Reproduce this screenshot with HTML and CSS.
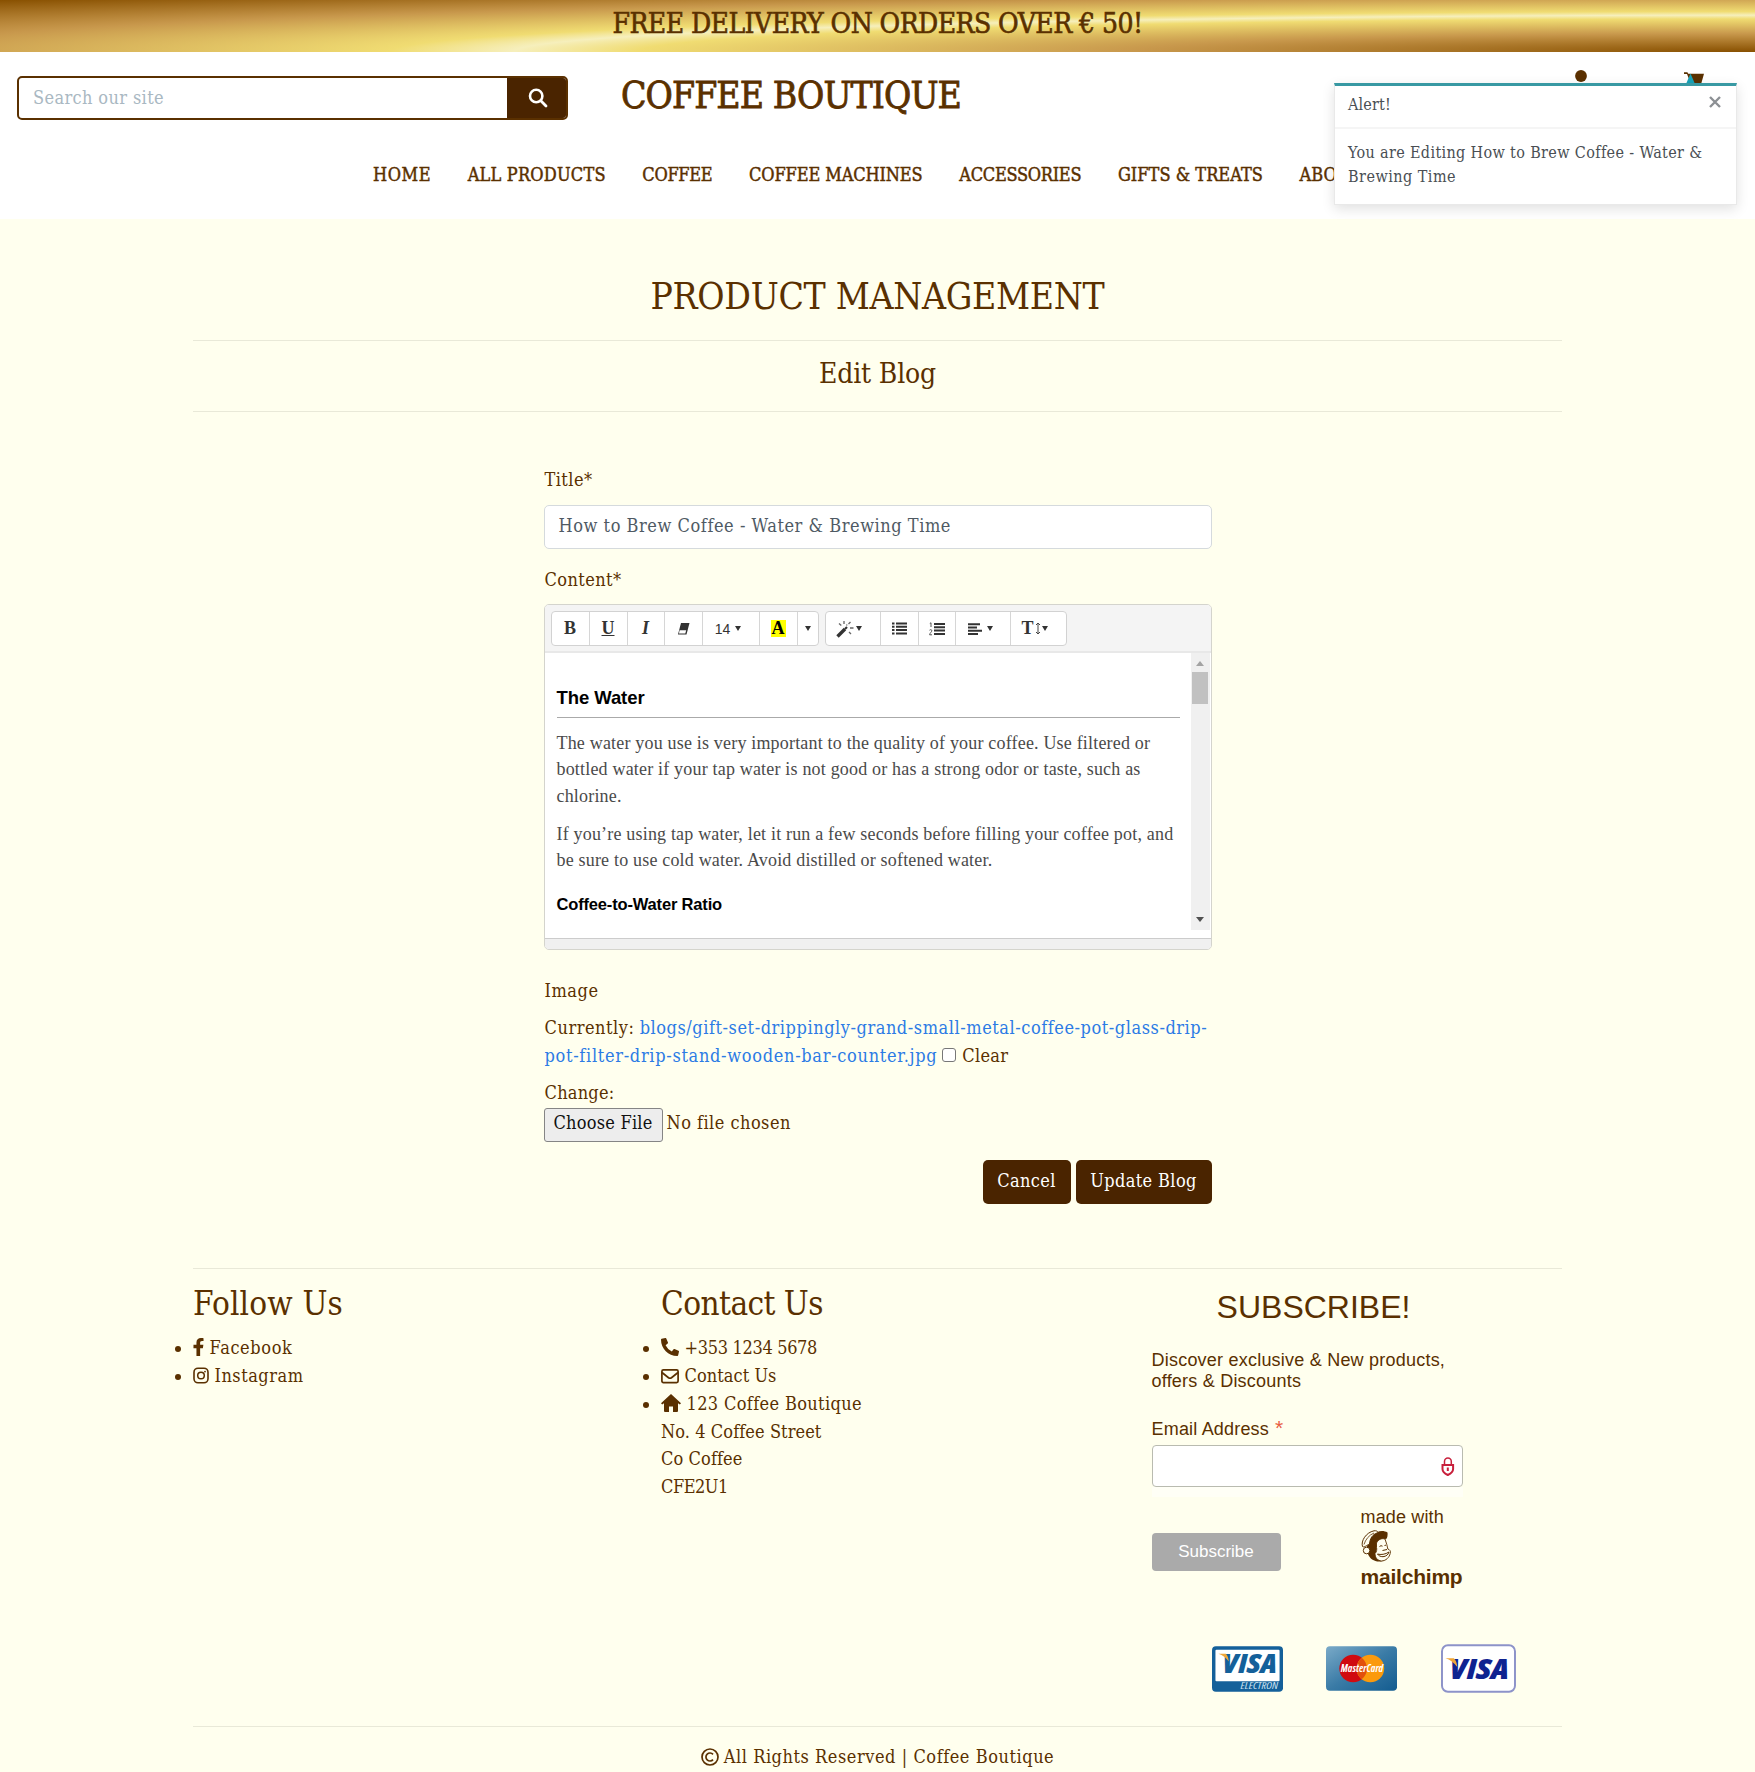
FILE: index.html
```
<!DOCTYPE html>
<html lang="en">
<head>
<meta charset="utf-8">
<title>Coffee Boutique</title>
<link rel="stylesheet" href="styles.css">
</head>
<body>
<div class="banner"><span class="t-banner">FREE DELIVERY ON ORDERS OVER € 50!</span></div>
<header class="header">
  <div class="topbar">
    <form class="search">
      <div class="search-field"><span class="t-search">Search our site</span></div>
      <div class="search-btn"><svg width="20" height="20" viewBox="0 0 20 20"><circle cx="8.2" cy="8" r="6.2" fill="none" stroke="#fff" stroke-width="2.6"/><path d="M12.8 12.8 18 18" stroke="#fff" stroke-width="2.8" stroke-linecap="round"/></svg></div>
    </form>
    <div class="logo"><span class="t-logo">COFFEE BOUTIQUE</span></div>
    <div class="account">
      <svg class="user" width="20" height="24" viewBox="0 0 20 24"><circle cx="10" cy="6" r="5.9"/><path d="M1 23c0-6 4-9 9-9s9 3 9 9z"/></svg>
      <svg class="cart" width="22" height="20" viewBox="0 0 22 20"><path d="M1 1.2h3.4l.8 1.6H21l-2.6 9.2H7.5L4 3H1z"/><path d="M3 13 7.500 2.500 12 13z" fill="#17a2b8"/></svg>
    </div>
  </div>
  <nav class="nav">
    <span class="t-n1">HOME</span><span class="t-n2">ALL PRODUCTS</span><span class="t-n3">COFFEE</span><span class="t-n4">COFFEE MACHINES</span><span class="t-n5">ACCESSORIES</span><span class="t-n6">GIFTS &amp; TREATS</span><span>ABOUT</span>
  </nav>
</header>
<aside class="toast">
  <div class="toast-head"><span class="t-alert">Alert!</span><svg width="14" height="14" viewBox="0 0 14 14"><path d="M2 2l10 10M12 2 2 12" stroke="#8c9094" stroke-width="2.4"/></svg></div>
  <div class="toast-body"><span class="t-toast1">You are Editing How to Brew Coffee - Water &amp;</span><br><span class="t-toast2">Brewing Time</span></div>
</aside>
<main class="container">
  <h1 class="title"><span class="t-h1">PRODUCT MANAGEMENT</span></h1>
  <h2 class="subtitle"><span class="t-h2">Edit Blog</span></h2>
  <form class="form">
    <div class="label label-title"><span class="t-lt">Title*</span></div>
    <div class="input"><span class="t-in">How to Brew Coffee - Water &amp; Brewing Time</span></div>
    <div class="label label-content"><span class="t-lc">Content*</span></div>
    <div class="editor">
      <div class="toolbar">
        <div class="group">
          <span class="tb w38 ser">B</span><span class="tb w38 ser und">U</span><span class="tb w37 ser ita">I</span>
          <span class="tb w38"><svg width="13" height="12" viewBox="0 0 13 12"><path d="M4 0h8.500L9.500 11.500H1z" fill="#333"/><path d="M2.600 7.200h6.600l-.9 3.200H2z" fill="#fff"/></svg></span>
          <span class="tb w57 size"><span class="num">14</span><i class="caret"></i></span>
          <span class="tb w38"><b class="hl">A</b></span>
          <span class="tb w20"><i class="caret"></i></span>
        </div>
        <div class="group">
          <span class="tb w55 wand"><svg width="18" height="18" viewBox="0 0 18 18"><path d="M1.500 16.500 9 9" stroke="#333" stroke-width="3.400"/><path d="M9 9l2-2" stroke="#333" stroke-width="2.200"/><path d="M3 3.500l2.300 2M8 1v3M14.500 2l-2 2M14 8h3.500M13 12l2 2M10.500 5.500l.5-1" stroke="#666" stroke-width="1.300"/></svg><i class="caret"></i></span>
          <span class="tb w38"><svg width="15" height="13" viewBox="0 0 15 13"><path d="M0 1.500h2.500M0 4.800h2.500M0 8.100h2.500M0 11.400h2.500M4 1.500h11M4 4.800h11M4 8.100h11M4 11.400h11" stroke="#333" stroke-width="2"/></svg></span>
          <span class="tb w37"><svg width="16" height="14" viewBox="0 0 16 14"><path d="M5 2h11M5 5.300h11M5 8.600h11M5 11.900h11" stroke="#333" stroke-width="2"/><path d="M.8 1.500 2 .8V5M.5 8.200c1-1 2.500-.6 2.300.6C2.700 10 .8 11 .6 12.800H3" fill="none" stroke="#555" stroke-width="1"/></svg></span>
          <span class="tb w55 para"><svg width="14" height="12" viewBox="0 0 14 12"><path d="M0 1.200h12M0 4.500h9M0 7.800h14M0 11h10" stroke="#333" stroke-width="1.900"/></svg><i class="caret"></i></span>
          <span class="tb w55 ser th">T<svg width="6" height="13" viewBox="0 0 6 13"><path d="M3 2v9M1 3l2-2 2 2M1 10l2 2 2-2" fill="none" stroke="#444" stroke-width="1"/></svg><i class="caret"></i></span>
        </div>
      </div>
      <div class="editable">
        <div class="doc">
          <h3 class="doc-h"><span class="t-d0">The Water</span></h3>
          <p class="t-doc">The water you use is very important to the quality of your coffee. Use filtered or<br>bottled water if your tap water is not good or has a strong odor or taste, such as<br>chlorine.</p>
          <p class="t-doc">If you’re using tap water, let it run a few seconds before filling your coffee pot, and<br>be sure to use cold water. Avoid distilled or softened water.</p>
          <h4><span class="t-d6">Coffee-to-Water Ratio</span></h4>
        </div>
        <div class="scroll"><i class="up"></i><i class="thumb"></i><i class="down"></i></div>
      </div>
      <div class="status"></div>
    </div>
    <div class="label label-image"><span class="t-im">Image</span></div>
    <div class="current"><span class="t-cu">Currently:</span> <a class="t-l1">blogs/gift-set-drippingly-grand-small-metal-coffee-pot-glass-drip-</a><br><a class="t-l2">pot-filter-drip-stand-wooden-bar-counter.jpg</a><i class="check"></i><span class="t-cl">Clear</span></div>
    <div class="change"><span class="t-ch">Change:</span></div>
    <div class="file"><span class="file-btn"><span class="t-cf">Choose File</span></span><span class="t-nf">No file chosen</span></div>
    <div class="actions"><span class="btn b1"><span class="t-ca">Cancel</span></span><span class="btn b2"><span class="t-up">Update Blog</span></span></div>
  </form>
</main>
<footer class="container footer">
  <div class="cols">
    <section class="col-follow">
      <h2 class="fh"><span class="t-f1">Follow Us</span></h2>
      <ul>
        <li><svg width="11" height="18" viewBox="10 0 300 512" preserveAspectRatio="none"><path d="M279.14 288l14.22-92.66h-88.91v-60.13c0-25.35 12.42-50.06 52.24-50.06h40.42V6.260S260.430 0 225.360 0c-73.220 0-121.080 44.380-121.080 124.720v70.620H22.890V288h81.390v224h100.170V288z"/></svg><span class="t-fb">Facebook</span></li>
        <li><svg width="16" height="17" viewBox="0 0 16 17"><rect x="1" y="1.200" width="14" height="14.600" rx="4" fill="none" stroke="#5a3000" stroke-width="1.600"/><circle cx="8" cy="8.500" r="3.300" fill="none" stroke="#5a3000" stroke-width="1.500"/><circle cx="12" cy="4.600" r=".9"/></svg><span class="t-ig">Instagram</span></li>
      </ul>
    </section>
    <section class="col-contact">
      <h2 class="fh"><span class="t-f2">Contact Us</span></h2>
      <ul>
        <li><svg width="18" height="18" viewBox="0 0 512 512"><g transform="rotate(180 256 256)"><path d="M497.390 361.800l-112-48a24 24 0 0 0-28 6.900l-49.600 60.600A370.660 370.660 0 0 1 130.600 204.110l60.600-49.600a23.940 23.940 0 0 0 6.900-28l-48-112A24.160 24.160 0 0 0 122.600.610l-104 24A24 24 0 0 0 0 48c0 256.500 207.900 464 464 464a24 24 0 0 0 23.400-18.600l24-104a24.290 24.290 0 0 0-14.010-27.600z" transform="rotate(180 256 256)"/></g></svg><span class="t-c1">+353 1234 5678</span></li>
        <li><svg width="18" height="16" viewBox="0 0 18 16"><rect x=".9" y="1.900" width="16.200" height="12.700" rx="1.500" fill="none" stroke="#5a3000" stroke-width="1.700"/><path d="M1 4.500 7.500 9.700q1.500 1 3 0L17 4.500" fill="none" stroke="#5a3000" stroke-width="1.700"/></svg><span class="t-c2">Contact Us</span></li>
        <li><svg width="20" height="18" viewBox="0 0 20 18"><path d="M10 0 0 9.300l1.200 1.300L3 9.200V17q0 1 1 1h4v-5.500h4V18h4q1 0 1-1V9.200l1.800 1.400L20 9.300l-3.500-3.200z"/></svg><span class="t-c3">123 Coffee Boutique</span><br><span class="t-c4">No. 4 Coffee Street</span><br><span class="t-c5">Co Coffee</span><br><span class="t-c6">CFE2U1</span></li>
      </ul>
    </section>
    <section class="col-sub">
      <h2 class="sh">SUBSCRIBE!</h2>
      <p class="sp">Discover exclusive &amp; New products,<br>offers &amp; Discounts</p>
      <div class="sl"><span class="t-s4">Email Address</span> <span class="req">*</span></div>
      <div class="si"><svg width="14" height="19" viewBox="0 0 14 19"><path d="M3.500 7.500V4.500a3.400 3.400 0 0 1 6.800 0v3" fill="none" stroke="#c8203c" stroke-width="1.500"/><path d="M1.500 8h10.600v4q0 3.500-5.300 6-5.300-2.500-5.300-6z" fill="#fff" stroke="#c8203c" stroke-width="2"/><path d="M6.800 10.500v3.500" stroke="#c8203c" stroke-width="2"/></svg></div>
      <div class="sstrip"></div>
      <div class="srow">
        <div class="sbtn">Subscribe</div>
        <div class="chimp">
          <div class="mw">made with</div>
          <svg width="31" height="33" viewBox="0 0 31 33"><path d="M6 16C9 13 8.500 9 12 5.500 15 1 22-.5 26.500 2.500c.3 2.500 0 4-.7 6L23 9.500C19 8.500 17 11 16.500 14c.5 2-.5 4-1 6.500 0 5 3.500 8.500 9 9-5 4-15.500 2.500-18-7z" fill="#5a3000"/><path d="M15.500 13c1.500-3.500 5-5 8.500-4l1.800 5.500 1 4.500c2 .6 3.200 2.200 2.400 4.500-1 4-4.200 7.300-8.700 7.500-4-.3-6.500-3.500-6.500-7.500 1.800-1.500 2-4.500 1.500-6z" fill="#fffff0" stroke="#5a3000" stroke-width=".9"/><path d="M16.500 24c3 1 8 .5 11.500-2-.5 2.500-3 4.500-6 4.700-2.500 0-4.500-1-5.500-2.700zM18.500 16.500q1.500-1.500 3-.3M23.500 15.500l1.500-.4M21.500 20.500l4.500-1" fill="none" stroke="#5a3000" stroke-width="1"/><path d="M8.500 14C6 15 3 18 1.500 16.500-.3 11 5 2.500 13 .8c2.500-.3 4.500.7 3.500 2-5 1.500-7.500 5.500-8 11.200z" fill="#fffff0" stroke="#5a3000" stroke-width="1"/><path d="M3 14.500C4.500 9.500 8 5 13 3" fill="none" stroke="#5a3000" stroke-width=".8"/><circle cx="5.600" cy="20.500" r="3.300" fill="#fffff0" stroke="#5a3000" stroke-width="1"/></svg>
          <div class="mc">mailchimp</div>
        </div>
      </div>
      <div class="cards">
        <svg width="72" height="46" viewBox="0 0 72 46"><rect width="72" height="46" rx="4" fill="#14609a"/><rect x="3.500" y="3.500" width="65" height="32" rx="1" fill="#fff"/><text class="visa" x="10" y="27.300" font-size="26" textLength="56" lengthAdjust="spacingAndGlyphs" fill="#14609a">VISA</text><path d="M6.500 7.500H14q2.500 2 3 8Q13 9.500 6.500 7.500z" fill="#f0a73a"/><text class="elec" x="29" y="42.800" font-size="8.500" textLength="38" lengthAdjust="spacingAndGlyphs">ELECTRON</text></svg>
        <svg width="72" height="46" viewBox="0 0 72 46"><defs><linearGradient id="mcg" x1="0" y1="0" x2="1" y2="1"><stop offset="0" stop-color="#7aaac8"/><stop offset=".5" stop-color="#3a7ba6"/><stop offset="1" stop-color="#135c90"/></linearGradient></defs><rect width="72" height="45" rx="4" fill="url(#mcg)"/><circle cx="27.500" cy="22.500" r="14" fill="#d00a10"/><circle cx="45" cy="22.500" r="14" fill="#fb9a0c"/><path d="M36.250 11.600a14 14 0 0 1 0 21.800 14 14 0 0 1 0-21.800z" fill="#e2500c"/><text class="mcard" x="15" y="26" font-size="10.500" textLength="43" lengthAdjust="spacingAndGlyphs" fill="#fff">MasterCard</text></svg>
        <svg width="76" height="49" viewBox="0 0 76 49"><rect x="1" y="1" width="74" height="47" rx="6" fill="#fff" stroke="#8d93c9" stroke-width="2"/><text class="visa" x="8" y="35" font-size="28" textLength="61" lengthAdjust="spacingAndGlyphs" fill="#0f2390">VISA</text><path d="M4.500 14H13q3 2.500 3.500 9Q11.500 16 4.500 14z" fill="#f0a73a"/></svg>
      </div>
    </section>
  </div>
  <div class="copy"><svg width="18" height="18" viewBox="0 0 18 18"><circle cx="9" cy="9" r="8" fill="none" stroke="#5a3000" stroke-width="1.700"/><path d="M12 11.600a4 4 0 1 1 0-5.200" fill="none" stroke="#5a3000" stroke-width="1.700"/></svg><span class="t-cp">All Rights Reserved | Coffee Boutique</span></div>
</footer>
</body>
</html>
```
FILE: styles.css
```
* { box-sizing: border-box; }
body { margin: 0; background: #ffffee; color: #5a3000; font-family: "DejaVu Serif Condensed", "DejaVu Serif", serif; font-stretch: condensed; font-size: 18px; line-height: 28px; height: 1772px; overflow: hidden; position: relative; }
h1, h2, h3, h4, p, ul { margin: 0; font-weight: 400; }
span, a { white-space: nowrap; }
svg { fill: #5a3000; }

/* Announcement bar */
.banner { height: 52px; line-height: 48px; text-align: center; font-size: 28px; -webkit-text-stroke: .6px; background: radial-gradient(ellipse farthest-corner at right bottom, #885000 0%, #c8984c 25%, #f0dc72 45%, #f6efbc 50%, #f0dc72 55%, #c8984c 75%, #885000 100%); }

/* Header */
.header { height: 167px; background: #fff; padding-top: 24px; }
.topbar { display: flex; height: 44px; padding-left: 17px; }
.search { display: flex; width: 551px; border: 2px solid #5a3000; border-radius: 5px; background: #fff; overflow: hidden; }
.search-field { flex: 1; padding-left: 14px; line-height: 39px; color: #a9b8c2; }
.search-btn { width: 59px; background: #4a2400; display: flex; align-items: center; justify-content: center; padding-left: 2px; }
.logo { margin-left: 53px; font-size: 37px; line-height: 40px; -webkit-text-stroke: .8px; }
.account { margin-left: auto; margin-top: -6px; display: flex; width: 184px; }
.cart { margin: 1px 0 0 92px; }
.nav { display: flex; gap: 36.7px; padding: 41px 0 0 373px; -webkit-text-stroke: .45px; }

/* Notification */
.toast { position: absolute; left: 1334px; top: 83px; width: 403px; height: 122px; background: #fff; border: 1px solid #e9e9e9; border-top: 3px solid #3899a3; box-shadow: 0 4px 12px rgba(0,0,0,.12); font-size: 16px; line-height: 24px; color: #4a4f54; }
.toast-head { height: 43px; border-bottom: 2px solid #f5f5f5; padding: 7px 14px 0 13px; display: flex; justify-content: space-between; }
.toast-head svg { margin-top: 2px; }
.toast-body { padding: 12px 13px; }

/* Page headings */
.container { width: 1369px; margin: 0 auto; }
.title { font-size: 37px; line-height: 44px; padding: 56px 0 21px; text-align: center; border-bottom: 1px solid #e9e9d8; }
.subtitle { font-size: 28px; line-height: 34px; padding: 16px 0 21px; text-align: center; border-bottom: 1px solid #e9e9d8; height: 71px; }

/* Blog form */
.form { width: 668px; margin: 0 auto; padding-top: 54px; }
.label { height: 28px; padding-left: 1px; }
.input { margin-top: 11px; height: 44px; border: 1px solid #d5dadd; border-radius: 5px; background: #fff; padding-left: 14px; line-height: 39px; color: #4f5a64; }
.label-content { margin-top: 17px; }
.editor { margin-top: 10px; height: 346px; border: 1px solid #d4d4cd; border-radius: 5px; background: #fff; overflow: hidden; }
.toolbar { height: 48px; background: #f4f4f4; border-bottom: 2px solid #e8e8e8; padding: 6px 6px 0; display: flex; gap: 6px; }
.group { display: flex; height: 35px; background: #fff; border: 1px solid #d2d2d2; border-radius: 4px; }
.tb { display: flex; align-items: center; justify-content: center; gap: 5px; border-right: 1px solid #d6d6d6; color: #333; }
.tb:last-child { border-right: 0; }
.w20 { width: 20px; }
.w37 { width: 37px; }
.w38 { width: 38px; }
.w55 { width: 55px; }
.w57 { width: 57px; }
.ser { font: bold 18px "Liberation Serif", serif; }
.und { text-decoration: underline; }
.ita { font-style: italic; }
.th { gap: 1px; padding-right: 7px; }
.wand { gap: 2px; padding-right: 8px; }
.para { padding-right: 4px; }
.size { padding-right: 5px; }
.num { font: 14px "Liberation Sans", sans-serif; }
.hl { background: #ff0; color: #000; font: bold 18px/17px "Liberation Serif", serif; padding: 0 1px; }
.caret { border: 3.5px solid transparent; border-top: 5px solid #333; border-bottom: 0; }
.editable { display: flex; height: 285px; }
.doc { flex: 1; padding: 0 11px 0 12px; font: 18px/26.3px "Liberation Serif", serif; color: #4a4a4a; white-space: nowrap; }
.doc-h { font: bold 18.5px/24px "Liberation Sans", sans-serif; color: #000; padding: 33px 0 7px; border-bottom: 1px solid #aaa; margin-bottom: 12px; }
.doc p { margin-bottom: 12px; }
.doc h4 { font: bold 16.5px/22px "Liberation Sans", sans-serif; color: #000; padding-top: 8px; }
.scroll { width: 19px; height: 277px; background: #f0f0f0; margin-right: 1px; display: flex; flex-direction: column; align-items: center; }
.up { border: 4px solid transparent; border-bottom: 5px solid #a3a3a3; border-top: 0; margin-top: 8px; }
.thumb { width: 16px; height: 32px; background: #c1c1c1; margin-top: 6px; }
.down { border: 4px solid transparent; border-top: 5px solid #505050; border-bottom: 0; margin-top: auto; margin-bottom: 8px; }
.status { height: 12px; background: #f0f0f0; border-top: 1px solid #ccc; }
.label-image { margin-top: 27px; }
.current { margin-top: 9px; padding-left: 1px; line-height: 27.7px; white-space: nowrap; }
.current a { color: #2c7be5; }
.check { display: inline-block; width: 14px; height: 14px; border: 1px solid #777; border-radius: 3px; background: #fff; margin: 0 6px 0 5px; }
.change { margin-top: 10px; padding-left: 1px; height: 29px; }
.file { display: flex; height: 34px; line-height: 30px; gap: 4px; }
.file-btn { width: 119px; text-align: center; background: #ededed; border: 1px solid #858585; border-radius: 3px; color: #111; line-height: 28px; }
.actions { display: flex; justify-content: flex-end; gap: 5px; margin-top: 18px; line-height: 42px; color: #fff; }
.btn { height: 44px; background: #4a2400; border-radius: 5px; text-align: center; }
.b1 { width: 88px; }
.b2 { width: 136px; }

/* Footer */
.footer { margin-top: 64px; }
.cols { display: flex; height: 458px; border-top: 1px solid #e9e9d8; }
.col-follow { width: 468px; }
.col-contact { width: 490.5px; }
.col-sub { width: 364px; font-family: "Liberation Sans", sans-serif; }
.fh { font-size: 33px; line-height: 40px; padding-top: 15px; height: 65px; }
.cols ul { padding: 0; line-height: 27.75px; }
.cols li svg { vertical-align: -2px; margin-right: 5.5px; }
.sh { font-size: 32px; line-height: 40px; padding-top: 18px; text-align: center; width: 324px; }
.sp { font-size: 18px; line-height: 20.5px; margin-top: 23px; letter-spacing: .22px; }
.sl { font-size: 18px; line-height: 24px; margin-top: 25px; }
.req { color: #e85c41; font-size: 21px; margin-left: 1px; }
.si { width: 311px; height: 42px; margin-top: 4px; border: 1px solid #b9bbb0; border-radius: 4px; background: #fff; display: flex; align-items: center; justify-content: flex-end; padding-right: 7px; }
.sstrip { height: 10px; width: 311px; background: #fffff6; }
.srow { display: flex; justify-content: space-between; width: 311px; margin-top: 8px; }
.sbtn { width: 129px; height: 38px; margin-top: 28px; background: #aaa; border-radius: 4px; color: #fff; text-align: center; line-height: 37px; font-size: 17px; }
.chimp { width: 102px; }
.chimp svg { display: block; margin-top: 1px; }
.mw { font-size: 18px; line-height: 24px; letter-spacing: .15px; }
.mc { font-size: 21px; font-weight: bold; line-height: 28px; letter-spacing: -.21px; }
.cards { display: flex; align-items: center; padding-left: 60px; gap: 43.5px; margin-top: 53px; }
.visa { font-family: "Open Sans", sans-serif; font-weight: 800; font-style: italic; }
.mcard { font-family: "Open Sans", sans-serif; font-weight: 700; font-style: italic; }
.elec { font-family: "Open Sans", sans-serif; font-style: italic; fill: #cfe2f0; }
.copy { border-top: 1px solid #e9e9d8; padding-top: 16px; display: flex; justify-content: center; align-items: center; gap: 5px; }

/* Tracking */
.t-banner { letter-spacing: -.553px; }
.t-search { letter-spacing: .377px; }
.t-logo { letter-spacing: -.909px; }
.t-n1 { letter-spacing: .547px; }
.t-n2 { letter-spacing: .195px; }
.t-n3 { letter-spacing: -.297px; }
.t-n4 { letter-spacing: -.114px; }
.t-n5 { letter-spacing: -.27px; }
.t-n6 { letter-spacing: .029px; }
.t-alert { letter-spacing: .172px; }
.t-toast1 { letter-spacing: .354px; }
.t-toast2 { letter-spacing: .473px; }
.t-h1 { letter-spacing: -.315px; }
.t-h2 { letter-spacing: -.17px; }
.t-lt { letter-spacing: .443px; }
.t-in { letter-spacing: .551px; }
.t-lc { letter-spacing: .414px; }
.t-d0 { letter-spacing: -.083px; }
.t-doc { letter-spacing: .185px; }
.t-d6 { letter-spacing: -.165px; }
.t-im { letter-spacing: .528px; }
.t-cu { letter-spacing: .537px; }
.t-l1 { letter-spacing: .55px; }
.t-l2 { letter-spacing: .692px; }
.t-cl { letter-spacing: .291px; }
.t-ch { letter-spacing: .241px; }
.t-cf { letter-spacing: .226px; }
.t-nf { letter-spacing: .477px; }
.t-ca { letter-spacing: .365px; }
.t-up { letter-spacing: .369px; }
.t-f1 { letter-spacing: .155px; }
.t-fb { letter-spacing: .627px; }
.t-ig { letter-spacing: .51px; }
.t-f2 { letter-spacing: -.556px; }
.t-c1 { letter-spacing: -.33px; }
.t-c2 { letter-spacing: .059px; }
.t-c3 { letter-spacing: .361px; }
.t-c4 { letter-spacing: .09px; }
.t-c5 { letter-spacing: .101px; }
.t-c6 { letter-spacing: -.5px; }
.t-s4 { letter-spacing: .188px; }
.t-cp { letter-spacing: .551px; }
```
